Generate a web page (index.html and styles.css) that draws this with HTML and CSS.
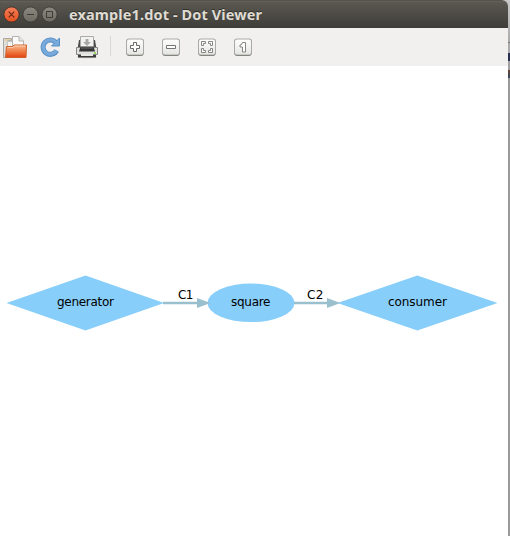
FILE: index.html
```html
<!DOCTYPE html>
<html lang="en">
<head>
<meta charset="utf-8">
<title>example1.dot - Dot Viewer</title>
<link rel="stylesheet" href="styles.css">
</head>
<body>
<div class="desktop">
<main class="window">
  <header class="titlebar">
    <svg class="controls" width="60" height="28" viewBox="0 0 60 28">
      <defs>
        <linearGradient id="close" x2="0" y2="1"><stop stop-color="#f6805a"/><stop offset="1" stop-color="#e4501f"/></linearGradient>
        <linearGradient id="knob" x2="0" y2="1"><stop stop-color="#8b897f"/><stop offset="1" stop-color="#6c6a62"/></linearGradient>
      </defs>
      <circle cx="11.5" cy="14.5" r="7.6" fill="url(#close)" stroke="#3a2c24" stroke-width=".8"/>
      <circle cx="30.5" cy="14.5" r="7.6" fill="url(#knob)" stroke="#373632" stroke-width=".8"/>
      <circle cx="49.5" cy="14.5" r="7.6" fill="url(#knob)" stroke="#373632" stroke-width=".8"/>
      <path d="M8.700 11.700l5.600 5.600M14.300 11.700l-5.600 5.600" stroke="#642714" stroke-width="1.100"/>
      <path d="M27 14.500h7" stroke="#3d3c37"/>
      <path d="M46.500 11.500h6v6h-6z" fill="none" stroke="#3d3c37"/>
    </svg>
    <h1 class="title">example1.dot - Dot Viewer</h1>
  </header>
  <nav class="toolbar">
    <svg class="tool" viewBox="0 0 28 28">
      <defs><linearGradient id="folder" x2="0" y2="1"><stop stop-color="#f9bd92"/><stop offset=".5" stop-color="#ef7f48"/><stop offset="1" stop-color="#e2420d"/></linearGradient></defs>
      <path d="M3.500 26.500v-19h8v19z" fill="#dddcd8" stroke="#aaa9a5"/>
      <path d="M5 9h6" stroke="#f0c36a"/>
      <path d="M7.500 10.500h7v11h-7z" fill="#f5f5f4" stroke="#c5c4c1"/>
      <path d="M12.500 5.500h6.500l4.500 4.500v9h-11z" fill="#fafafa" stroke="#b4b4b1"/>
      <path d="M12.500 5.500v4h-5" fill="none" stroke="#b4b4b1"/>
      <path d="M19 5.500v4.500h4.500" fill="#e5e5e4" stroke="#b4b4b1"/>
      <path d="M6.500 15.500h6l1.500-1.500h12.500l-.5 12.500h-20.500z" fill="url(#folder)" stroke="#d0602d"/>
      <path d="M7.500 16.500h5.500l1.500-1.500h11" fill="none" stroke="#fbd0b2" stroke-width=".8"/>
    </svg>
    <svg class="tool" viewBox="0 0 28 28">
      <path d="M20.200 12A7.200 7.200 0 1 0 20.700 19.500" fill="none" stroke="#5790c8" stroke-width="5"/>
      <path d="M23.500 7v8h-8z" fill="#78aede" stroke="#5790c8"/>
      <path d="M20 11.500A7.200 7.200 0 1 0 20.500 19.700" fill="none" stroke="#79aadb" stroke-width="3.200"/>
      <path d="M22.500 9.500v4h-4z" fill="#79aadb"/>
    </svg>
    <svg class="tool" viewBox="0 0 28 28">
      <ellipse cx="15" cy="26" rx="10" ry="1.300" fill="#c9c8c5"/>
      <path d="M7 9h16l1.500 9h-19z" fill="#4b4b4a"/>
      <path d="M8.500 5.500h13v11h-13z" fill="#f2f2f1" stroke="#aaaaa7"/>
      <path d="M13.500 8h3v3H19l-4 4-4-4h2.500z" fill="#a9aaa8"/>
      <path d="M4.500 16.500h21v7h-21z" fill="#dfdfde" stroke="#858583"/>
      <path d="M8.500 15.500h13l1.500 5H7z" fill="#343434"/>
      <path d="M9 17h12" stroke="#777" stroke-width=".8"/>
      <path d="M6 24h18v2.500H6z" fill="#3b3b3a"/>
      <path d="M9 23h12v2H9z" fill="#e8e8e7"/>
      <path d="M22 21h2v2h-2z" fill="#9bd65e"/>
    </svg>
    <span class="separator"></span>
    <svg class="tool" viewBox="0 0 28 28">
      <defs>
        <linearGradient id="key" x2="0" y2="1"><stop stop-color="#fefefe"/><stop offset="1" stop-color="#e5e5e2"/></linearGradient>
        <g id="button"><rect x="6.300" y="8.300" width="17.400" height="16.700" rx="3" fill="#777872"/><rect x="6" y="7.500" width="18" height="16.700" rx="3" fill="#a9aaa6"/><rect x="7" y="8.500" width="16" height="15" rx="2" fill="url(#key)"/></g>
      </defs>
      <use href="#button"/>
      <path d="M13.500 11.500h3v3h3v3h-3v3h-3v-3h-3v-3h3z" fill="#fff" stroke="#686966"/>
    </svg>
    <svg class="tool" viewBox="0 0 28 28"><use href="#button"/><path d="M10.500 14.500h9v3h-9z" fill="#fff" stroke="#747571"/></svg>
    <svg class="tool" viewBox="0 0 28 28"><use href="#button"/><path d="M9.500 10.500h4v2h-2v2h-2zM16.500 10.500h4v4h-2v-2h-2zM9.500 17.500h2v2h2v2h-4zM18.500 17.500h2v4h-4v-2h2z" fill="#fff" stroke="#858682"/></svg>
    <svg class="tool" viewBox="0 0 28 28"><use href="#button"/><path d="M14.500 11.500h3v9.500h-3v-5h-2.500v-2q2 0 2.500-2.500z" fill="#fff" stroke="#858682"/></svg>
  </nav>
  <svg class="graph" width="508" height="470" viewBox="0 66 508 470">
    <g class="node"><path d="M85.500 275.500L164 303 85.500 330.500 6.500 303z"/><ellipse cx="251" cy="302.800" rx="43.500" ry="19.300"/><path d="M417.300 275.500L497.500 303 417.300 330.500 337.500 303z"/></g>
    <path class="edge" d="M163 303h35M294 303h34"/>
    <path class="arrow" d="M197 298l13.500 5-13.500 5zM327 298l13.500 5-13.500 5z"/>
    <g class="label">
      <text x="57" y="306" textLength="57">generator</text>
      <text x="231" y="306" textLength="39.500">square</text>
      <text x="388" y="306" textLength="59">consumer</text>
      <text x="178" y="299" textLength="15.500">C1</text>
      <text x="307" y="299" textLength="16.500">C2</text>
    </g>
  </svg>
</main>
<aside class="backdrop"></aside>
</div>
</body>
</html>
```
FILE: styles.css
```css
body {
  margin: 0;
  background: #fff;
}

.desktop {
  display: flex;
  width: 510px;
  height: 536px;
  overflow: hidden;
  background: linear-gradient(#c9c9c9, #aaa 42px, #999 43px, #999);
}

.window {
  display: flex;
  flex-direction: column;
  width: 508px;
  background: #fff;
  border-radius: 0 6px 0 0;
  overflow: hidden;
}

.titlebar {
  display: flex;
  align-items: center;
  box-sizing: border-box;
  height: 28px;
  background: linear-gradient(#46453f 0, #64625a 1px, #595750 3px, #3e3d38);
}

.controls {
  display: block;
}

.title {
  margin: 0 0 0 9px;
  color: #dfdbd2;
  font: bold 14.5px/28px "Noto Sans", "Open Sans", sans-serif;
  letter-spacing: 0.12px;
  white-space: nowrap;
  text-shadow: 0 -1px #302f2b;
}

.toolbar {
  display: flex;
  height: 38px;
  background: #f1f0ee;
}

.tool {
  width: 28px;
  height: 28px;
  margin: 3px 8px 0 0;
}

.separator {
  width: 1px;
  height: 20px;
  margin: 8px 9px 0 2px;
  background: #d9d7d4;
}

.graph {
  display: block;
}

.node {
  fill: #87cefa;
}

.edge {
  stroke: #9abfcd;
  stroke-width: 2.4;
}

.arrow {
  fill: #9abfcd;
}

.label {
  font: 12px "DejaVu Sans", sans-serif;
  fill: #000;
}

.backdrop {
  width: 2px;
  height: 536px;
  background: linear-gradient(#c9c9c9 0, #aaa 42px, #777 42px, #777 43px, #aaa 43px, #aaa 53px, #273050 53px, #273050 61px, #a0a0a0 61px, #a0a0a0 70px, #713f2b 70px, #304968 78px, #999 78px);
}
```
